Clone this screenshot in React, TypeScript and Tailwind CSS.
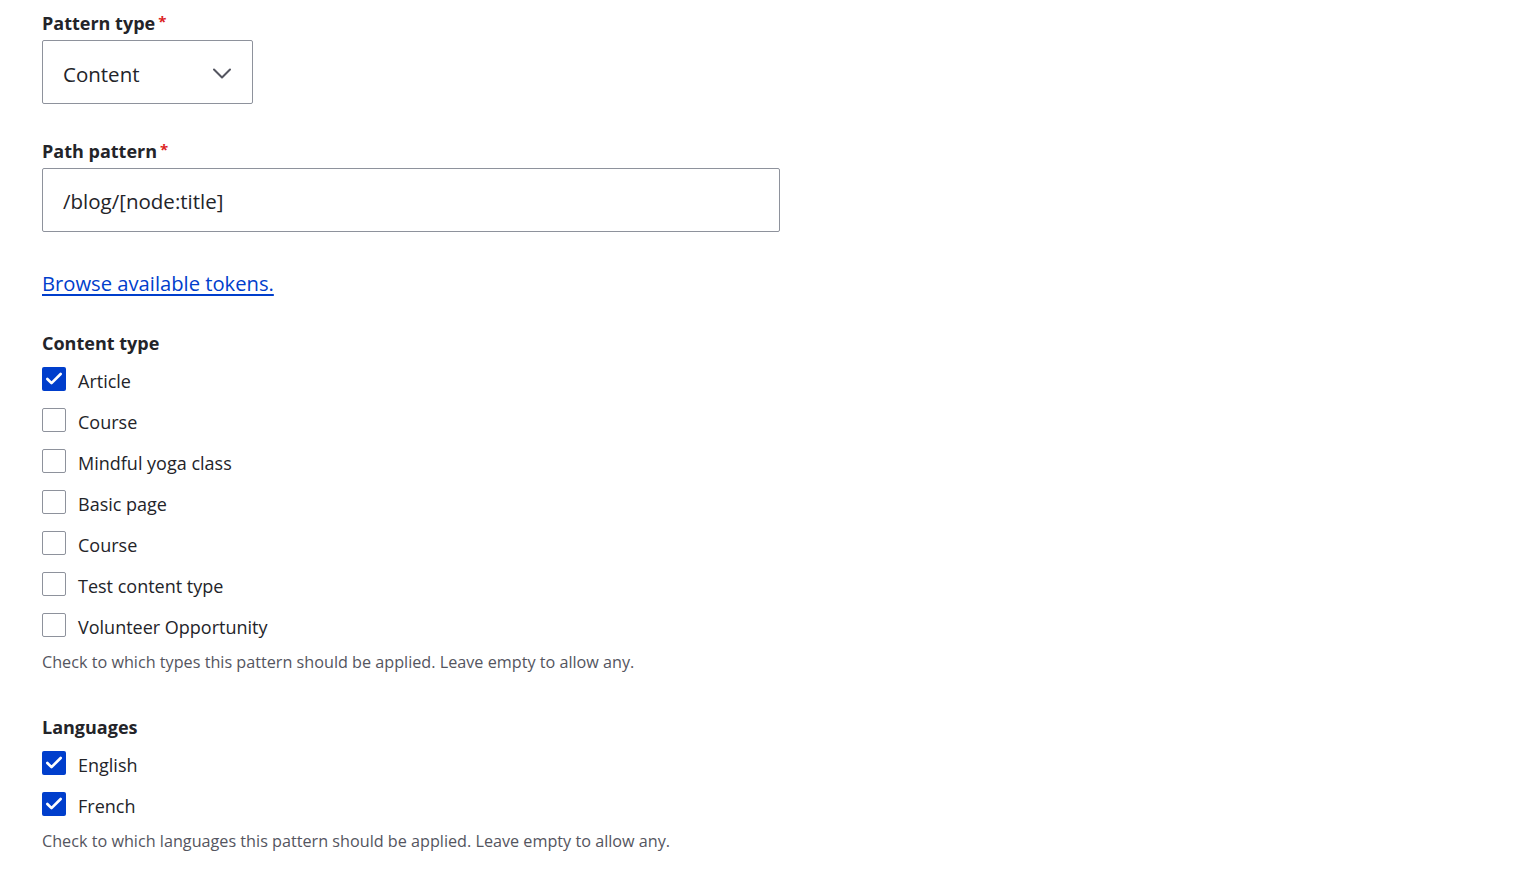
import { Check } from 'lucide-react';

const contentTypes = [
  { label: 'Article', checked: true },
  { label: 'Course', checked: false },
  { label: 'Mindful yoga class', checked: false },
  { label: 'Basic page', checked: false },
  { label: 'Course', checked: false },
  { label: 'Test content type', checked: false },
  { label: 'Volunteer Opportunity', checked: false },
];

const languages = [
  { label: 'English', checked: true },
  { label: 'French', checked: true },
];

function FieldLabel({ text, required }: { text: string; required?: boolean }) {
  return (
    <div className="h-[26px] flex items-center text-[18px] font-bold text-[#232429]">
      {text}
      {required && <span className="ml-[3px] text-[15px] text-[#dc2323] -mt-[4px]">*</span>}
    </div>
  );
}

function CheckRow({ label, checked }: { label: string; checked: boolean }) {
  return (
    <label className="h-[41px] flex items-center gap-[12px]">
      {checked ? (
        <span className="w-[24px] h-[24px] rounded-[2px] bg-[#003ecc] flex items-center justify-center">
          <Check className="w-[20px] h-[20px] text-white" strokeWidth={3.2} />
        </span>
      ) : (
        <span className="w-[24px] h-[24px] rounded-[2px] border border-[#8e929c] bg-white" />
      )}
      <span className="text-[18px] text-[#232429] pt-[5px]">{label}</span>
    </label>
  );
}

export default function App() {
  return (
    <div className="min-h-screen bg-white px-[42px] pt-[10px] font-['Open_Sans',sans-serif]">
      {/* Pattern type */}
      <FieldLabel text="Pattern type" required />
      <div className="mt-[4px] w-[211px] h-[64px] border border-[#8e929c] rounded-[2px] flex items-center justify-between pl-[20px] pr-[21px]">
        <span className="text-[20.5px] text-[#232429] pt-[4px]">Content</span>
        <svg width="18" height="11" viewBox="0 0 18 11" fill="none" className="mt-[2px]">
          <polyline points="1,1.5 9,9.5 17,1.5" stroke="#545560" strokeWidth="2" strokeLinecap="round" strokeLinejoin="round" />
        </svg>
      </div>

      {/* Path pattern */}
      <div className="mt-[34px]">
        <FieldLabel text="Path pattern" required />
      </div>
      <div className="mt-[4px] w-[738px] h-[64px] border border-[#8e929c] rounded-[2px] flex items-center pl-[20px]">
        <span className="text-[20.5px] text-[#232429] pt-[3px]">/blog/[node:title]</span>
      </div>

      <div className="mt-[36px] h-[28px] flex items-center">
        <a href="#" className="text-[20.2px] text-[#003ecc] underline underline-offset-[3px] pt-[2px]">
          Browse available tokens.
        </a>
      </div>

      {/* Content type */}
      <div className="mt-[34px]">
        <FieldLabel text="Content type" />
      </div>
      <div className="mt-[2px]">
        {contentTypes.map((t, i) => (
          <CheckRow key={i} label={t.label} checked={t.checked} />
        ))}
      </div>
      <div className="mt-[5px] h-[24px] flex items-center text-[16.2px] text-[#545560]">
        Check to which types this pattern should be applied. Leave empty to allow any.
      </div>

      {/* Languages */}
      <div className="mt-[40px]">
        <FieldLabel text="Languages" />
      </div>
      <div className="mt-[2px]">
        {languages.map((t, i) => (
          <CheckRow key={i} label={t.label} checked={t.checked} />
        ))}
      </div>
      <div className="mt-[5px] h-[24px] flex items-center text-[16.2px] text-[#545560]">
        Check to which languages this pattern should be applied. Leave empty to allow any.
      </div>
    </div>
  );
}
